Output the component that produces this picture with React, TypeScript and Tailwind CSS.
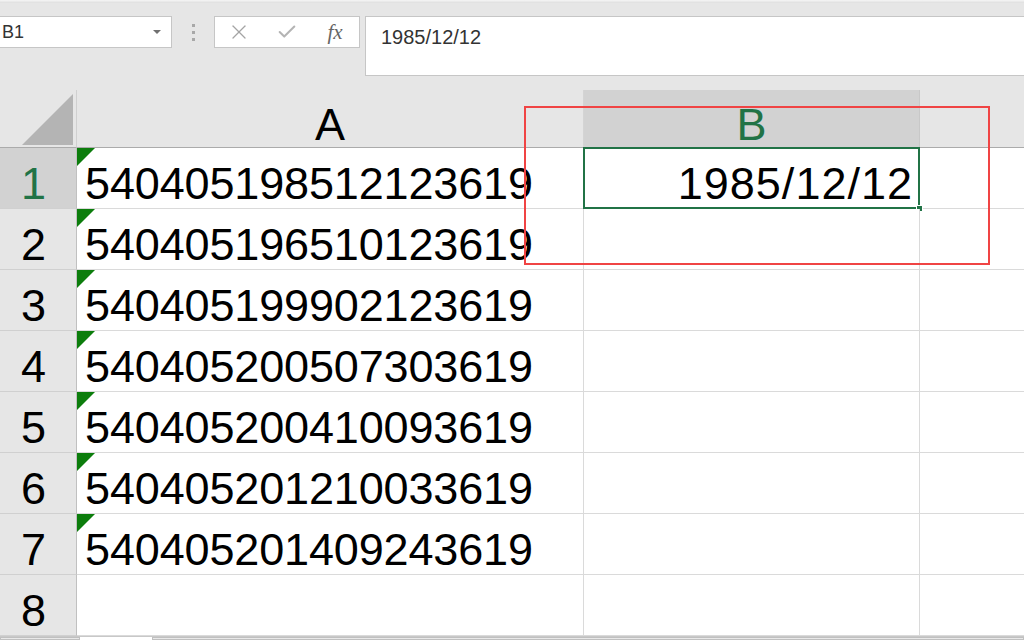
import React from 'react';
import { X, Check } from 'lucide-react';

const rows = [
  '540405198512123619',
  '540405196510123619',
  '540405199902123619',
  '540405200507303619',
  '540405200410093619',
  '540405201210033619',
  '540405201409243619',
  '',
];

const App: React.FC = () => {
  return (
    <div className="relative w-[1024px] h-[640px] overflow-hidden bg-[#e6e6e6] flex flex-col font-['Liberation_Sans',Arial,sans-serif]">
      {/* 上の細い帯 */}
      <div className="h-[3px] bg-gradient-to-b from-[#f6f6f6] to-[#dedede]" />

      {/* 数式バー */}
      <div className="h-[87px] pt-[13px] flex items-start">
        <div className="w-[172px] h-[32px] bg-white border-y border-r border-[#c6c6c6] flex items-center pl-[2px] pr-[10px]">
          <span className="text-[18px] text-[#333]">B1</span>
          <span className="ml-auto w-0 h-0 border-l-[4px] border-r-[4px] border-t-[4px] border-l-transparent border-r-transparent border-t-[#707070]" />
        </div>
        <div className="ml-[19px] w-[4px] h-[32px] flex flex-col items-center justify-center gap-[4px]">
          <span className="w-[3px] h-[3px] bg-[#a8a8a8]" />
          <span className="w-[3px] h-[3px] bg-[#a8a8a8]" />
          <span className="w-[3px] h-[3px] bg-[#a8a8a8]" />
        </div>
        <div className="ml-[19px] w-[146px] h-[32px] bg-white border border-[#c6c6c6] flex items-center">
          <div className="w-[48px] flex justify-center">
            <X size={24} strokeWidth={1.3} className="text-[#a4a4a4]" />
          </div>
          <div className="w-[48px] flex justify-center">
            <Check size={22} strokeWidth={2.2} className="text-[#b4b4b4]" />
          </div>
          <div className="w-[48px] flex justify-center">
            <span className="italic text-[21px] leading-none text-[#666] font-['Liberation_Serif',serif]">fx</span>
          </div>
        </div>
        <div className="ml-[5px] flex-1 h-[60px] bg-white border-y border-l border-[#c6c6c6] pl-[15px] pt-[5px]">
          <span className="text-[20px] text-[#333]">1985/12/12</span>
        </div>
      </div>

      {/* シート */}
      <div className="grid grid-cols-[77px_507px_336px_104px] grid-rows-[58px_repeat(8,61px)]">
        {/* 左上の角 */}
        <div className="border-r border-b border-r-[#d0d0d0] border-b-[#ababab] flex items-end justify-end pr-[3px] pb-[2px] pt-[4px]">
          <div className="w-[51px] h-[51px] bg-[#b4b4b4] [clip-path:polygon(100%_0,100%_100%,0_100%)]" />
        </div>
        <div className="border-r border-b border-r-[#d4d4d4] border-b-[#ababab] flex items-end justify-center">
          <span className="text-[45px] leading-none text-black">A</span>
        </div>
        <div className="border-r border-b border-r-[#c8c8c8] border-b-[#ababab] bg-[#d2d2d2] flex items-end justify-center">
          <span className="text-[45px] leading-none text-[#217346]">B</span>
        </div>
        <div className="border-b border-b-[#ababab]" />

        {rows.map((value, i) => {
          const first = i === 0;
          return (
            <React.Fragment key={i}>
              <div
                className={`border-r border-b border-r-[#c0c0c0] border-b-[#d0d0d0] flex items-end justify-center pb-[2px] pr-[9px] ${
                  first ? 'bg-[#d2d2d2]' : 'bg-[#e6e6e6]'
                }`}
              >
                <span className={`text-[45px] leading-none ${first ? 'text-[#217346]' : 'text-black'}`}>{i + 1}</span>
              </div>
              <div className="relative bg-white border-r border-b border-[#dadada] flex items-end pl-[8px] pb-[2px]">
                {value && (
                  <>
                    <div className="absolute left-0 top-0 w-[18px] h-[18px] bg-[#0c7d0c] [clip-path:polygon(0_0,100%_0,0_100%)]" />
                    <span className="text-[45px] leading-none text-black tracking-[-0.15px]">{value}</span>
                  </>
                )}
              </div>
              <div className="relative bg-white border-r border-b border-[#dadada] flex items-end justify-end pr-[6px] pb-[2px]">
                {first && (
                  <>
                    <span className="text-[45px] leading-none text-black tracking-[1px]">1985/12/12</span>
                    <div className="absolute -left-px -top-px -right-px -bottom-px border-2 border-[#217346]" />
                    <div className="absolute -right-[4px] -bottom-[4px] w-[7px] h-[7px] bg-[#217346] border border-white" />
                  </>
                )}
              </div>
              <div className="bg-white border-b border-[#dadada]" />
            </React.Fragment>
          );
        })}
      </div>

      {/* シートタブ */}
      <div className="flex-1 bg-[#f0f0f0] border-t border-[#c8c8c8] flex">
        <div className="w-[80px] border border-[#c0c0c0] bg-[#e8e8e8]" />
        <div className="w-[72px] bg-white" />
        <div className="flex-1 border border-[#c0c0c0] bg-[#e8e8e8]" />
      </div>

      {/* 赤い枠 */}
      <div className="absolute left-[524px] top-[106px] w-[466px] h-[159px] border-2 border-[#f04444]" />
    </div>
  );
};

export default App;
